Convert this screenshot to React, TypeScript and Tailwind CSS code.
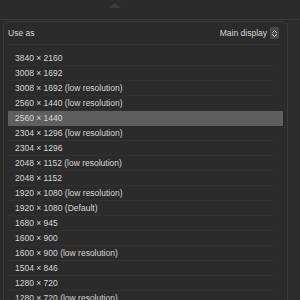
const resolutions = [
  '3840 × 2160',
  '3008 × 1692',
  '3008 × 1692 (low resolution)',
  '2560 × 1440 (low resolution)',
  '2560 × 1440',
  '2304 × 1296 (low resolution)',
  '2304 × 1296',
  '2048 × 1152 (low resolution)',
  '2048 × 1152',
  '1920 × 1080 (low resolution)',
  '1920 × 1080 (Default)',
  '1680 × 945',
  '1600 × 900',
  '1600 × 900 (low resolution)',
  '1504 × 846',
  '1280 × 720',
  '1280 × 720 (low resolution)',
]

const selected = 4

function UpDownIcon() {
  return (
    <span className="ml-[3px] flex h-[12px] w-[9px] items-center justify-center rounded-[2px] bg-[#4a4a4a]">
      <svg width="7" height="9" viewBox="0 0 7 9" fill="none">
        <path d="M1.5 3.5 L3.5 1.5 L5.5 3.5" stroke="#d8d8d8" strokeWidth="1" strokeLinecap="round" strokeLinejoin="round" />
        <path d="M1.5 5.5 L3.5 7.5 L5.5 5.5" stroke="#d8d8d8" strokeWidth="1" strokeLinecap="round" strokeLinejoin="round" />
      </svg>
    </span>
  )
}

export default function App() {
  return (
    <div
      className="flex h-[300px] w-[300px] flex-col overflow-hidden bg-[#2a2a2a] text-[8.5px] text-[#d6d6d6]"
      style={{ fontFamily: '"Liberation Sans", Arial, sans-serif' }}
    >
      <div className="relative h-[20px] shrink-0 border-b border-[#3a3a3a] bg-[#2b2b2b]">
        <svg className="absolute left-[109px] top-[2px]" width="12" height="6" viewBox="0 0 12 6">
          <path d="M0 6 L6 0.5 L12 6 Z" fill="#3a3a3a" />
        </svg>
      </div>
      <div className="flex min-h-0 flex-1">
        <div className="ml-[3px] mt-[1px] flex w-[285px] flex-col rounded-t-[6px] border border-b-0 border-[#3b3b3b] bg-[#2b2b2b]">
          <div className="flex h-[22px] shrink-0 items-center justify-between pl-[4px] pr-[8px]">
            <span>Use as</span>
            <div className="flex items-center">
              <span>Main display</span>
              <UpDownIcon />
            </div>
          </div>
          <div className="mx-[4px] border-t border-[#313131] pt-[6px]">
            {resolutions.map((r, i) => (
              <div
                key={r}
                className={
                  i === selected
                    ? 'flex h-[15px] items-center bg-[#5e5e5e] pl-[7px]'
                    : 'flex h-[15px] items-center border-b border-[#313131] pl-[7px] mr-[10px]'
                }
              >
                {r}
              </div>
            ))}
          </div>
        </div>
        <div className="flex-1 bg-[#2c2c2c]" />
      </div>
    </div>
  )
}
